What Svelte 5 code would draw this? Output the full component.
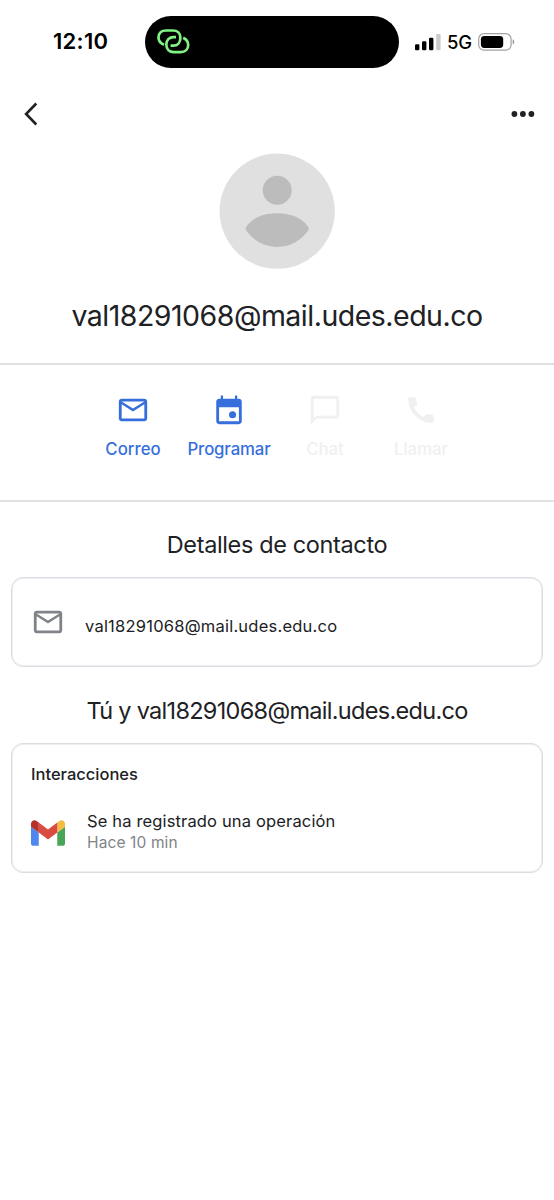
<script>
  const email = 'val18291068@mail.udes.edu.co';
  const mailPath =
    'M22 6c0-1.1-.9-2-2-2H4c-1.1 0-2 .9-2 2v12c0 1.1.9 2 2 2h16c1.1 0 2-.9 2-2V6zm-2 0l-8 5-8-5h16zm0 12H4V8l8 5 8-5v10z';
  const actions = [
    { label: 'Correo', kind: 'mail', enabled: true },
    { label: 'Programar', kind: 'event', enabled: true },
    { label: 'Chat', kind: 'chat', enabled: false },
    { label: 'Llamar', kind: 'call', enabled: false }
  ];
</script>

<main class="screen">
  <div class="status">
    <span class="time">12:10</span>
    <div class="island">
      <svg width="34" height="28" viewBox="0 0 34 28" fill="none" stroke="#80f383" stroke-width="2.7" stroke-linecap="butt">
        <path d="M8.1 17.8C4.5 16.3 2.5 13.5 2.5 10.5C2.5 6 5.5 3.5 10 3.5H17C21.5 3.5 24.4 6.5 24.4 10.7C24.4 15.5 21.5 18.7 17.3 18.7H14.6" />
        <path d="M20 10.1H17.5C13.3 10.1 10.3 13 10.3 17.5C10.3 22 13.3 25.1 17.8 25.1H24.7C29.3 25.1 32.2 22 32.2 18C32.2 15 30.6 12.3 27.2 10.7" />
      </svg>
    </div>
    <div class="radio">
      <svg width="26" height="17" viewBox="0 0 26 17">
        <rect x="0" y="10.2" width="4.4" height="6" rx="1.2" />
        <rect x="7" y="7.2" width="4.4" height="9" rx="1.2" />
        <rect x="14" y="3.7" width="4.4" height="12.5" rx="1.2" />
        <rect x="21.2" y="0" width="4.4" height="16.2" rx="1.2" fill="#cbcbcb" />
      </svg>
      <span class="net">5G</span>
      <svg class="battery" width="37" height="18" viewBox="0 0 37 18">
        <rect x=".7" y=".7" width="32.4" height="16.4" rx="5.2" fill="none" stroke="#a2a2a2" stroke-width="1.2" />
        <rect x="2.9" y="2.9" width="22.3" height="12" rx="3.4" />
        <path d="M34.7 6.3C36.8 7.2 36.8 10.6 34.7 11.5Z" fill="#999" />
      </svg>
    </div>
  </div>

  <nav class="bar">
    <svg width="16" height="24" viewBox="0 0 16 24" fill="none" stroke="#202124" stroke-width="2.6">
      <path d="M13.3 1.5L3.1 12L13.3 22.5" />
    </svg>
    <svg width="24" height="8" viewBox="0 0 24 8" fill="#202124">
      <circle cx="3.4" cy="4" r="2.9" /><circle cx="11.9" cy="4" r="2.9" /><circle cx="20.4" cy="4" r="2.9" />
    </svg>
  </nav>

  <header class="profile">
    <svg width="116" height="116" viewBox="0 0 116 116">
      <circle cx="58.2" cy="58.2" r="57.6" fill="#e0e0e0" />
      <circle cx="58.2" cy="37.3" r="14.5" fill="#bcbcbc" />
      <path d="M27.2 74C33 65 44 60.2 58.2 60.2S83.4 65 89.2 74Q90.5 75.8 89.2 77.5C82 87.5 71.5 93.9 58.2 93.9S34.4 87.5 27.2 77.5Q25.9 75.8 27.2 74Z" fill="#bcbcbc" />
    </svg>
    <h1>{email}</h1>
  </header>

  <section class="actions">
    {#each actions as action}
      <div class="action" class:disabled={!action.enabled}>
        <svg width="34" height="34" viewBox="0 0 24 24" fill="currentColor">
          {#if action.kind === 'mail'}
            <path d={mailPath} />
          {:else if action.kind === 'event'}
            <path fill-rule="evenodd" d="M6.2 1.8h1.6V4h8.4V1.8h1.6V4H19c1.1 0 2 .9 2 2v14c0 1.1-.9 2-2 2H5c-1.1 0-2-.9-2-2V6c0-1.1.9-2 2-2h1.2V1.8zM5 10v10h14V10H5z" />
            <circle cx="14.5" cy="15.4" r="2.5" />
          {:else if action.kind === 'chat'}
            <path d="M20 2H4c-1.1 0-2 .9-2 2v18l4-4h14c1.1 0 2-.9 2-2V4c0-1.1-.9-2-2-2zm0 14H6l-2 2V4h16v12z" />
          {:else}
            <path d="M20.01 15.38c-1.23 0-2.42-.2-3.53-.56-.35-.12-.74-.03-1.01.24l-1.57 1.97c-2.83-1.35-5.48-3.9-6.89-6.83l1.95-1.66c.27-.28.35-.67.24-1.02-.37-1.11-.56-2.3-.56-3.53 0-.54-.45-.99-.99-.99H4.19C3.65 3 3 3.24 3 3.99 3 13.28 10.73 21 20.01 21c.71 0 .99-.63.99-1.18v-3.45c0-.54-.45-.99-.99-.99z" />
          {/if}
        </svg>
        <span class={action.kind}>{action.label}</span>
      </div>
    {/each}
  </section>

  <h2 class="details">Detalles de contacto</h2>
  <section class="card contact">
    <svg width="34" height="34" viewBox="0 0 24 24" fill="#80848a"><path d={mailPath} /></svg>
    <span>{email}</span>
  </section>

  <h2 class="shared">Tú y {email}</h2>
  <section class="card history">
    <h3>Interacciones</h3>
    <div class="entry">
      <svg width="34" height="26" viewBox="52 42 88 66">
        <path fill="#4f87ee" d="M58 108h14V74L52 59v43c0 3.32 2.69 6 6 6" />
        <path fill="#48a557" d="M120 108h14c3.32 0 6-2.69 6-6V59l-20 15" />
        <path fill="#f3bd42" d="M120 48v26l20-15v-8c0-7.42-8.47-11.65-14.4-7.2" />
        <path fill="#da4b40" d="M72 74V48l24 18 24-18v26L96 92" />
        <path fill="#b63029" d="M52 51v8l20 15V48l-5.6-4.2c-5.94-4.45-14.4-.22-14.4 7.2" />
      </svg>
      <div class="lines">
        <span class="subject">Se ha registrado una operación</span>
        <span class="when">Hace 10 min</span>
      </div>
    </div>
  </section>
</main>

<style>
  :global(body) { background: #fff; }
  .screen { width: 554px; height: 1200px; box-sizing: border-box; overflow: hidden; background: #fff; color: #202124; font-family: Inter, 'Liberation Sans', sans-serif; }
  .screen * { box-sizing: border-box; }
  svg { display: block; flex: none; }
  h1, h2, h3 { margin: 0; font-weight: 400; text-align: center; white-space: nowrap; }
  span { white-space: nowrap; }
  .status { height: 84px; display: grid; grid-template-columns: 145px 254px 155px; align-items: start; color: #000; }
  .time { font-size: 22px; line-height: 26px; font-weight: 600; padding: 28px 0 0 53px; letter-spacing: .3px; }
  .island { height: 52px; margin-top: 16px; border-radius: 26px; background: #000; padding: 11px 0 0 11px; }
  .radio { display: flex; align-items: center; height: 20px; margin: 32px 0 0 16px; }
  .net { font-size: 18.5px; font-weight: 450; margin-left: 6px; width: 25px; letter-spacing: -.2px; }
  .battery { margin-left: 6px; }
  .bar { height: 60px; display: flex; justify-content: space-between; align-items: center; padding: 0 19px 0 23px; }
  .profile { height: 221px; border-bottom: 2px solid #dfdfdf; display: flex; flex-direction: column; align-items: center; padding-top: 9px; }
  h1 { font-size: 28.5px; line-height: 36px; margin-top: 29px; letter-spacing: -.5px; }
  .actions { height: 137px; border-bottom: 2px solid #e2e2e2; display: grid; grid-template-columns: repeat(4, 96px); justify-content: center; padding-top: 28px; }
  .action { display: flex; flex-direction: column; align-items: center; color: #366fdc; }
  .action span { font-size: 16.8px; line-height: 22px; font-weight: 500; margin-top: 11px; }
  .action .event { letter-spacing: -.15px; }
  .action.disabled { color: #f0f0f2; }
  h2 { font-size: 23.5px; line-height: 30px; }
  .details { margin-top: 28px; letter-spacing: -.37px; }
  .shared { margin-top: 29px; letter-spacing: -.7px; }
  .card { margin: 17px 11px 0; border: 1px solid #dcdde2; box-shadow: inset 0 0 0 1px #eeeff2; border-radius: 12px; }
  .contact { height: 90px; display: flex; align-items: center; padding-left: 19px; }
  .contact span { font-size: 16.5px; margin: 7px 0 0 20px; letter-spacing: .22px; }
  .history { height: 130px; padding: 19px; }
  h3 { font-size: 16.5px; line-height: 22px; font-weight: 500; text-align: left; }
  .entry { display: flex; align-items: center; margin-top: 26px; height: 44px; }
  .lines { display: flex; flex-direction: column; margin-left: 22px; margin-top: -2px; }
  .subject { font-size: 16.5px; line-height: 22px; letter-spacing: .15px; }
  .when { font-size: 15.5px; line-height: 22px; color: #808489; letter-spacing: .12px; }
</style>
